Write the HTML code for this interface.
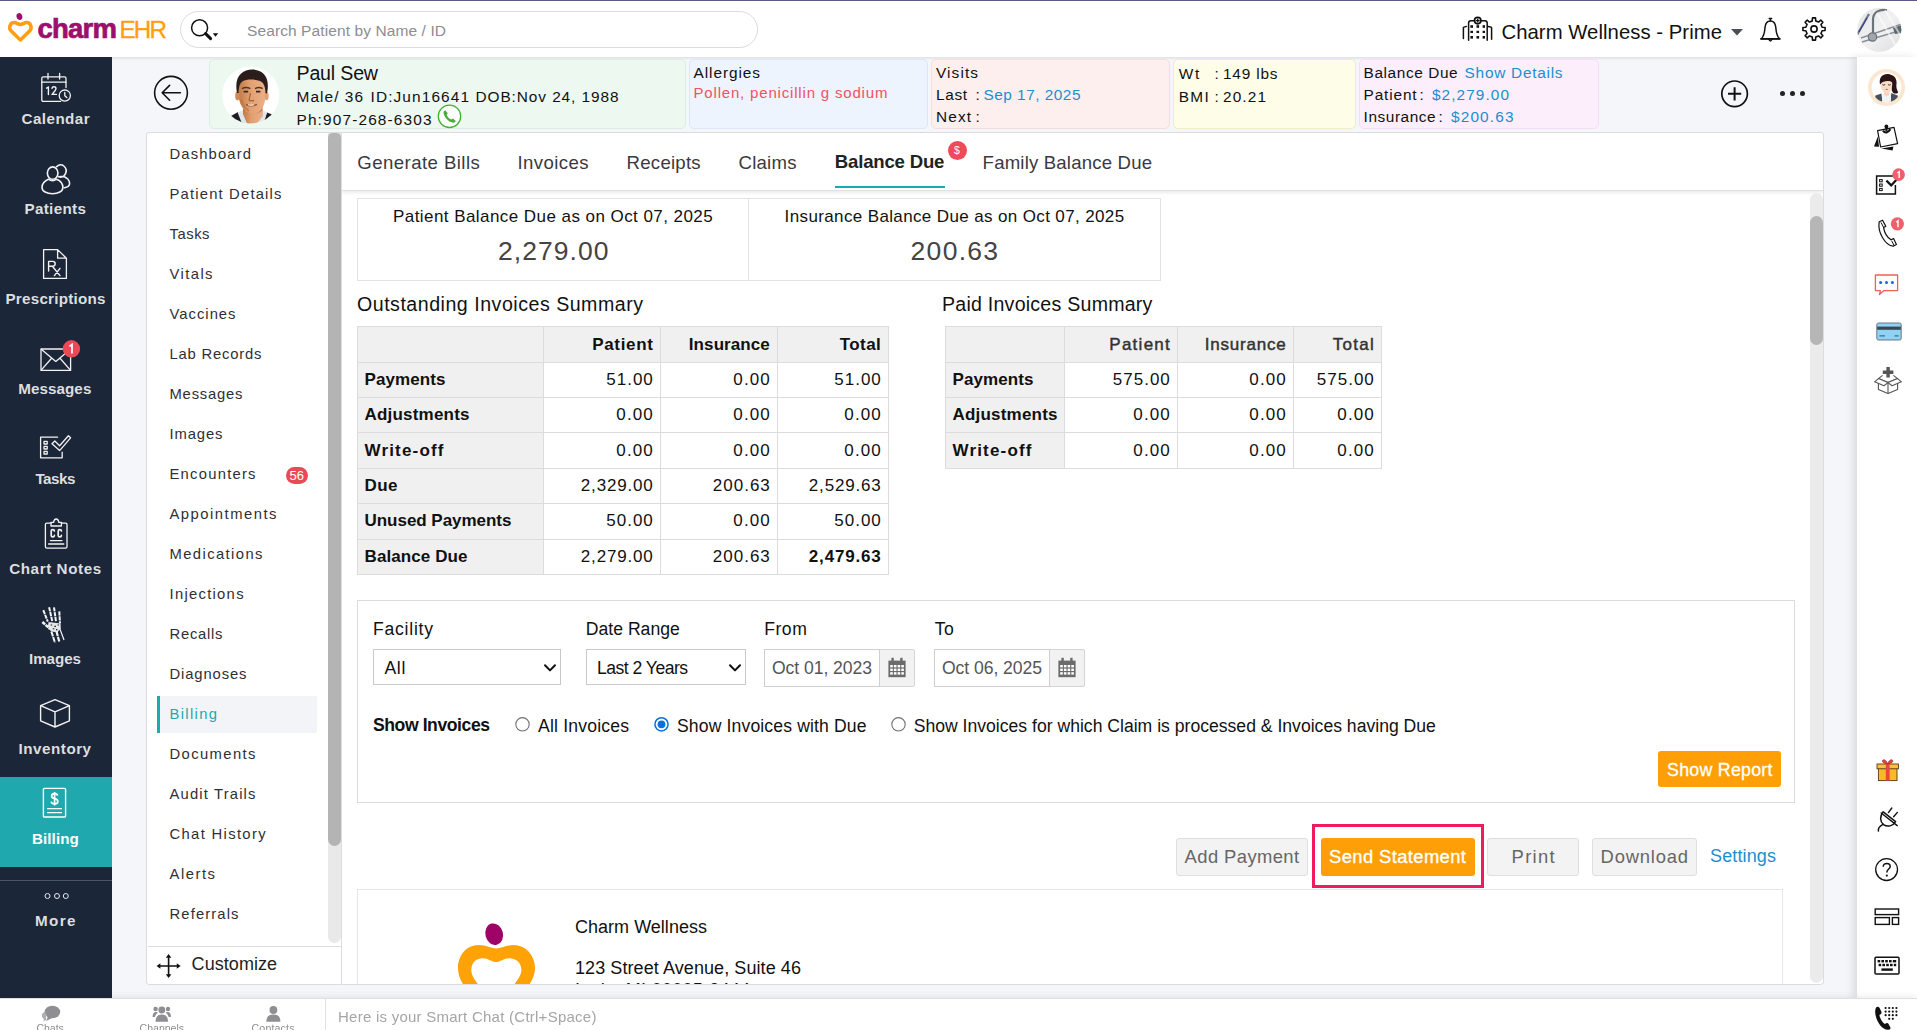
<!DOCTYPE html>
<html><head>
<meta charset="utf-8">
<title>CharmEHR - Billing</title>
<style>
*{box-sizing:border-box;margin:0;padding:0}
html,body{width:1917px;height:1030px;overflow:hidden;background:#f5f6fa;font-family:"Liberation Sans",sans-serif;color:#111}
.abs{position:absolute}
.t{position:absolute;white-space:nowrap;line-height:1}
#top{position:absolute;left:0;top:0;width:1917px;height:57px;background:#fff;border-top:1px solid #5b5b86;box-shadow:0 1px 3px rgba(0,0,0,.12)}
#nav{position:absolute;left:0;top:57px;width:112px;height:941px;background:#1c2639}
.nl{color:#dededf;font-weight:bold}
.ni{position:absolute}
#rbar{position:absolute;left:1857px;top:57px;width:60px;height:941px;background:#fff;box-shadow:-4px 0 8px rgba(0,0,0,.11)}
#bot{position:absolute;left:0;top:998px;width:1917px;height:32px;background:#fff;border-top:1px solid #e0e0e3;box-shadow:0 -2px 6px rgba(0,0,0,.07)}
.card{position:absolute;top:59px;height:70px;border:1px solid #e6e6ea;border-radius:5px}
#smenu{position:absolute;left:146px;top:132px;width:196px;height:853px;background:#fff;border:1px solid #dcdcde;border-radius:3px 0 0 3px}
.sm{color:#2f2f33}
#panel{position:absolute;left:342px;top:132px;width:1482px;height:853px;background:#fff;border:1px solid #dcdcde;border-left:none;border-radius:0 4px 4px 0;overflow:hidden}
</style>
</head>
<body>
<!-- TOP BAR -->
<div id="top">
 <!-- logo -->
 <svg class="abs" style="left:6px;top:8.1px" width="30" height="36" viewBox="0 0 30 36">
  <ellipse cx="13.4" cy="7.6" rx="2.9" ry="3.5" fill="#9c0f6c" transform="rotate(-15 13.4 7.6)"></ellipse>
  <path d="M14.4 30.9 L5.2 22 C2.2 19 4 13.2 8.6 13.6 C10.6 13.8 11.6 15.4 14.4 15.4 C17.2 15.4 18.2 13.8 20.2 13.6 C24.8 13.2 26.6 19 23.6 22 Z" fill="none" stroke="#ff9e0f" stroke-width="3.5" stroke-linejoin="round"></path>
 </svg>
 <span class="t" style="font-weight: bold; color: rgb(156, 15, 108); -webkit-text-stroke: 0.7px rgb(156, 15, 108); font-size: 27.5px; top: 14px; letter-spacing: -0.76px; left: 37.5px;">charm</span>
 <span class="t" style="color: rgb(255, 158, 15); -webkit-text-stroke: 0.35px rgb(255, 158, 15); font-size: 24.2px; top: 17px; letter-spacing: -1.79px; left: 119.4px;">EHR</span>
 <!-- search -->
 <div class="abs" style="left:180px;top:10px;width:578px;height:37px;border:1px solid #d9dbe0;border-radius:19px;background:#fff"></div>
 <svg class="abs" style="left:188px;top:16px" width="34" height="28" viewBox="0 0 34 28">
  <circle cx="11.6" cy="10.8" r="8" fill="none" stroke="#111" stroke-width="1.5"></circle>
  <path d="M17.6 16.6 L22.6 21.6" stroke="#111" stroke-width="3" stroke-linecap="round"></path>
  <path d="M24.8 16.2 h5.4 l-2.7 3.6 z" fill="#111"></path>
 </svg>
 <span class="t" style="color: rgb(141, 141, 147); font-size: 15.5px; top: 22px; letter-spacing: 0.1px; left: 247px;">Search Patient by Name / ID</span>
 <!-- hospital icon -->
 <svg class="abs" style="left:1460px;top:12px" width="36" height="32" viewBox="0 0 36 32">
  <g fill="none" stroke="#111" stroke-width="1.5" stroke-linecap="round" stroke-linejoin="round">
   <path d="M8.6 27.2 V10 Q8.6 7.7 11 7.7 H24.8 Q27.2 7.7 27.2 10 V27.2"></path>
   <path d="M3.4 25.6 V14.4 L6.4 13.4"></path>
   <path d="M31.6 26.2 V15 Q31.6 14.2 30.4 14 L28.4 13.6"></path>
   <circle cx="17.7" cy="7.6" r="3.2" fill="#fff" stroke-width="1.7"></circle>
  </g>
  <path d="M17.7 5.6 V9.6 M15.7 7.6 H19.7" stroke="#111" stroke-width="1.3"></path>
  <g fill="#111">
   <rect x="10.4" y="12.2" width="2.6" height="2.6"></rect><rect x="16.5" y="12.2" width="2.6" height="2.6"></rect><rect x="22.6" y="12.2" width="2.4" height="2.6"></rect>
   <rect x="10.4" y="17.8" width="2.6" height="2.2"></rect><rect x="16.5" y="17.8" width="2.6" height="2.2"></rect><rect x="22.6" y="17.8" width="2.4" height="2.2"></rect>
   <rect x="10.4" y="23" width="2.6" height="2.6"></rect><rect x="16.5" y="23" width="2.6" height="2.6"></rect><rect x="22.6" y="23" width="2.4" height="2.6"></rect>
  </g>
 </svg>
 <span class="t" style="color: rgb(17, 17, 17); font-size: 20.3px; top: 21px; letter-spacing: 0.05px; left: 1501.5px;">Charm Wellness - Prime</span>
 <svg class="abs" style="left:1730px;top:27px" width="14" height="8" viewBox="0 0 14 8"><path d="M1 1 H13 L7 7.4 Z" fill="#4a4f55"></path></svg>
 <!-- bell -->
 <svg class="abs" style="left:1758px;top:13px" width="26" height="30" viewBox="0 0 26 30">
  <g fill="none" stroke="#111" stroke-width="1.5" stroke-linejoin="round" stroke-linecap="round">
   <path d="M3.4 24.8 C6.8 21 6.6 17 7 13.4 C7.4 9.4 9.6 7 12.4 7 C15.2 7 17.4 9.4 17.8 13.4 C18.2 17 18 21 21.4 24.8 Z"></path>
   <path d="M3 24.9 H21.8" stroke-width="1.8"></path>
   <path d="M12.4 6.8 V4.8 M11.2 4.6 H13.6"></path>
   <path d="M10.8 25.2 Q12.4 28.6 14 25.2"></path>
  </g>
 </svg>
 <!-- gear -->
 <svg class="abs" style="left:1802.3px;top:16.4px" width="24" height="24" viewBox="0 0 24 24">
  <path d="M20.11 10.25 L23.10 10.51 L23.10 13.49 L20.11 13.75 L18.97 16.50 L20.90 18.79 L18.79 20.90 L16.50 18.97 L13.75 20.11 L13.49 23.10 L10.51 23.10 L10.25 20.11 L7.50 18.97 L5.21 20.90 L3.10 18.79 L5.03 16.50 L3.89 13.75 L0.90 13.49 L0.90 10.51 L3.89 10.25 L5.03 7.50 L3.10 5.21 L5.21 3.10 L7.50 5.03 L10.25 3.89 L10.51 0.90 L13.49 0.90 L13.75 3.89 L16.50 5.03 L18.79 3.10 L20.90 5.21 L18.97 7.50 Z" fill="none" stroke="#111" stroke-width="1.6" stroke-linejoin="round"></path>
  <circle cx="12" cy="12" r="3.1" fill="none" stroke="#111" stroke-width="1.6"></circle>
 </svg>
 <!-- user avatar (stethoscope photo) -->
 <svg class="abs" style="left:1857px;top:7px" width="45" height="45" viewBox="0 0 45 45">
  <defs><clipPath id="cpA"><circle cx="22.3" cy="21.8" r="22"></circle></clipPath>
  <linearGradient id="gA" x1="0" y1="0" x2="1" y2="1"><stop offset="0" stop-color="#e3e4e6"></stop><stop offset=".5" stop-color="#f1f1f2"></stop><stop offset="1" stop-color="#dcdddf"></stop></linearGradient></defs>
  <g clip-path="url(#cpA)">
   <rect width="45" height="45" fill="url(#gA)"></rect>
   <path d="M0 27 L12 6" stroke="#6f7486" stroke-width="2.2"></path>
   <path d="M2 24 L10 10" stroke="#2c3a8c" stroke-width="1"></path>
   <path d="M16 28 V12 C16 4 22 1 30 2" fill="none" stroke="#6d737b" stroke-width="2.2"></path>
   <path d="M4 30 L45 16 M5 34 L45 22" stroke="#8b9096" stroke-width="1.6"></path>
   <path d="M36 20 L45 17 L45 25 L38 26Z" fill="#5c6670"></path>
   <circle cx="15.5" cy="29" r="4.2" fill="#a2a7ad" stroke="#6d737b" stroke-width="1.2"></circle>
   <path d="M20 5 L40 40 M28 2 L45 30" stroke="#fff" stroke-width="2" opacity=".55"></path>
  </g>
 </svg>
</div>
<!-- LEFT NAV -->
<div id="nav">
 <div class="abs" style="left:0;top:720px;width:112px;height:90px;background:#1fa9ae"></div>
 <div class="abs" style="left:0;top:823px;width:112px;height:1px;background:#4b5463"></div>
</div>
<div id="navi">
 <!-- calendar -->
 <svg class="abs" style="left:40px;top:71px" width="32" height="33" viewBox="0 0 32 33" fill="none" stroke="#f2f2f2" stroke-width="1.3" stroke-linecap="round" stroke-linejoin="round">
  <path d="M20.6 30.4 H3.2 Q1.8 30.4 1.8 29 V7.2 Q1.8 5.8 3.2 5.8 H24.6 Q26 5.8 26 7.2 V16.6"></path>
  <path d="M1.8 11.2 H26 M8 2.4 V8 M19.6 2.4 V8"></path>
  <circle cx="24.8" cy="24.6" r="5.6"></circle>
  <path d="M24.8 21.4 V24.8 L26.8 26.6"></path>
  <path d="M6.6 17.2 L8.4 16 V23.6 M12 17.4 Q12.2 15.8 14 15.8 Q16 15.8 16 17.6 Q16 19 12 23.4 H16.4" stroke-width="1.4"></path>
 </svg>
 <span class="t nl" style="font-size: 15.2px; top: 111px; letter-spacing: 0.43px; left: 21.6px;">Calendar</span>
 <!-- patients -->
 <svg class="abs" style="left:40px;top:163px" width="32" height="33" viewBox="0 0 32 33" fill="none" stroke="#f2f2f2" stroke-width="1.6" stroke-linecap="round" stroke-linejoin="round">
  <path d="M16.6 3.7 A5.5 6.2 0 1 1 18.6 13.8 L23.8 13.4 C27 14.6 29.6 17.6 29.6 20.4 C29.6 22.6 27 24.2 24.4 24.8"></path>
  <ellipse cx="12.65" cy="10.1" rx="5.3" ry="6.2"></ellipse>
  <path d="M8.4 16.2 C4.6 17.8 2 20.8 2 24.5 C2 28.3 6.8 30.7 12.5 30.7 C18.2 30.7 22.9 28.3 22.9 24.5 C22.9 20.8 20.5 17.8 16.6 16.2 Q12.5 19.4 8.4 16.2 Z"></path>
 </svg>
 <span class="t nl" style="font-size: 15.2px; top: 201px; letter-spacing: 0.34px; left: 24.45px;">Patients</span>
 <!-- prescriptions -->
 <svg class="abs" style="left:41px;top:247px" width="28" height="34" viewBox="0 0 28 34" fill="none" stroke="#f2f2f2" stroke-width="1.3" stroke-linecap="round" stroke-linejoin="round">
  <path d="M2.6 2.6 H16.6 L25.4 11.2 V31.4 H2.6 Z M16.6 2.6 V11.2 H25.4"></path>
  <path d="M7.6 24 V14.4 H11.6 Q14.2 14.4 14.2 16.8 Q14.2 19.2 11.6 19.2 H7.6 M11.4 19.2 L19 28.6 M13.4 28.6 L19 21.4" stroke-width="1.4"></path>
 </svg>
 <span class="t nl" style="font-size: 15.2px; top: 291px; letter-spacing: 0.24px; left: 5.5px;">Prescriptions</span>
 <!-- messages -->
 <svg class="abs" style="left:39px;top:338px" width="44" height="36" viewBox="0 0 44 36">
  <g fill="none" stroke="#f2f2f2" stroke-width="1.3" stroke-linejoin="round"><rect x="2" y="11" width="29.6" height="21.4"></rect><path d="M2 11 L16.8 23.4 L31.6 11 M2 32.4 L12.8 20 M31.6 32.4 L20.8 20"></path></g>
  <circle cx="32.4" cy="10.8" r="8.7" fill="#ea4956"></circle>
  <path d="M30.4 8.4 L33 6.4 V15.4" fill="none" stroke="#fff" stroke-width="1.7"></path>
 </svg>
 <span class="t nl" style="font-size: 15.2px; top: 381px; letter-spacing: 0.06px; left: 18.3px;">Messages</span>
 <!-- tasks -->
 <svg class="abs" style="left:38px;top:433px" width="36" height="28" viewBox="0 0 36 28" fill="none" stroke="#f2f2f2" stroke-width="1.3" stroke-linejoin="round" stroke-linecap="round">
  <path d="M24.2 19.2 V24.8 H2.6 V4.2 H19.6"></path>
  <rect x="6" y="8.4" width="3.2" height="2.6"></rect><rect x="6" y="13.4" width="3.2" height="2.6"></rect><rect x="6" y="18.4" width="3.2" height="2.6"></rect>
  <path d="M14 10.8 L16.8 8 L21.6 12.8 L30.4 2.8 L32.6 4.8 L21.6 17.6 Z"></path>
 </svg>
 <span class="t nl" style="font-size: 15.2px; top: 471px; letter-spacing: -0.48px; left: 35.4px;">Tasks</span>
 <!-- chart notes -->
 <svg class="abs" style="left:43px;top:516px" width="26" height="35" viewBox="0 0 26 35" fill="none" stroke="#f2f2f2" stroke-width="1.3" stroke-linejoin="round" stroke-linecap="round">
  <path d="M8 7.2 H3.8 Q2.4 7.2 2.4 8.6 V30.8 Q2.4 32.2 3.8 32.2 H22.6 Q24 32.2 24 30.8 V8.6 Q24 7.2 22.6 7.2 H18.4"></path>
  <path d="M8 10 V6.4 H10.6 Q11 3 13.2 3 Q15.4 3 15.8 6.4 H18.4 V10 Z"></path>
  <path d="M11.4 15 Q11.4 13.6 9.8 13.6 Q8.2 13.6 8.2 15 V19.4 Q8.2 20.8 9.8 20.8 Q11.4 20.8 11.4 19.4 M18.4 15 Q18.4 13.6 16.8 13.6 Q15.2 13.6 15.2 15 V19.4 Q15.2 20.8 16.8 20.8 Q18.4 20.8 18.4 19.4" stroke-width="1.7"></path>
  <path d="M7.4 24.6 H19 M5.6 28 H20.8"></path>
 </svg>
 <span class="t nl" style="font-size: 15.2px; top: 561px; letter-spacing: 0.59px; left: 9.2px;">Chart Notes</span>
 <!-- images (hand xray) -->
 <svg class="abs" style="left:38px;top:604px" width="30" height="42" viewBox="38 604 30 42" fill="none" stroke="#f4f4f4" stroke-linecap="butt">
  <g stroke-width="2" stroke-dasharray="4.2 .7">
   <path d="M43.3 610.2 L47.8 621.6"></path><path d="M49.1 607.3 L52.3 621.2"></path><path d="M54 607.3 L56 621.6"></path><path d="M59.3 611.4 L60 623.4"></path>
  </g>
  <path d="M42.4 622 L50.2 629" stroke-width="2.6" stroke-dasharray="3.6 .7"></path>
  <path d="M48.6 622 L60.6 623.6 L60.8 628.6 L57.4 632.2 L51 631.4 L47.8 626.6 Z" fill="#f4f4f4" stroke="none" opacity=".92"></path>
  <path d="M50.6 625 h1.6 M54.4 626.4 h1.6 M57.6 625 h1.4 M52.8 628.8 h1.6 M56 629.6 h1.4" stroke="#1c2639" stroke-width="1.1"></path>
  <path d="M51.4 631.6 L55 642.8" stroke-width="2" stroke-dasharray="5 .7"></path>
  <path d="M56.4 631.2 L59.4 642" stroke-width="2.2" stroke-dasharray="5 .7"></path>
  <path d="M59.8 628.6 L64 640" stroke-width="1.2"></path>
 </svg>
 <span class="t nl" style="font-size: 15.2px; top: 651px; letter-spacing: -0.07px; left: 29px;">Images</span>
 <!-- inventory cube -->
 <svg class="abs" style="left:38px;top:697px" width="34" height="33" viewBox="0 0 34 33" fill="none" stroke="#f2f2f2" stroke-width="1.4" stroke-linejoin="round">
  <path d="M17 2.6 L31.4 8.6 V23.8 L17 30 L2.6 23.8 V8.6 Z M2.6 8.6 L17 14.8 L31.4 8.6 M17 14.8 V30"></path>
 </svg>
 <span class="t nl" style="font-size: 15.2px; top: 741px; letter-spacing: 0.52px; left: 18.55px;">Inventory</span>
 <!-- billing -->
 <svg class="abs" style="left:41px;top:786px" width="27" height="33" viewBox="0 0 27 33" fill="none" stroke="#fff" stroke-width="1.4" stroke-linejoin="round">
  <rect x="2.4" y="2.4" width="22.2" height="28.6" rx="1"></rect>
  <path d="M6 22.6 H21 M6 26.6 H21" stroke-width="1.3"></path>
  <path d="M16.6 9.6 Q16.2 7.6 13.6 7.6 Q10.6 7.6 10.6 10 Q10.6 12 13.6 12.6 Q16.8 13.2 16.8 15.4 Q16.8 17.8 13.6 17.8 Q10.6 17.8 10.2 15.6 M13.6 6 V19.4" stroke-width="1.7"></path>
 </svg>
 <span class="t nl" style="color: rgb(255, 255, 255); font-size: 15.2px; top: 831px; letter-spacing: 0.1px; left: 31.9px;">Billing</span>
 <!-- more -->
 <svg class="abs" style="left:42px;top:891px" width="30" height="10" viewBox="0 0 30 10" fill="none" stroke="#e8e8ee" stroke-width="1"><circle cx="5.5" cy="5" r="2.5"></circle><circle cx="15" cy="5" r="2.5"></circle><circle cx="23.8" cy="5" r="2.5"></circle></svg>
 <span class="t nl" style="font-size: 15.2px; top: 913px; letter-spacing: 1.4px; left: 34.95px;">More</span>
</div>
<!-- RIGHT BAR -->
<div id="rbar"></div>
<div id="rbi">
 <!-- assistant avatar -->
 <svg class="abs" style="left:1865px;top:66px" width="44" height="44" viewBox="0 0 44 44">
  <defs><clipPath id="cpW"><circle cx="21.5" cy="21.5" r="14.8"></circle></clipPath></defs>
  <circle cx="21.5" cy="21.5" r="18.6" fill="#e9e9ee" opacity=".6"></circle>
  <circle cx="21.5" cy="21.5" r="16.6" fill="#fff" stroke="#fde6cc" stroke-width="3.4"></circle>
  <g clip-path="url(#cpW)">
   <path d="M24 9 C30 8 32.4 14 31.4 19 C31 22 32.6 24.6 33.2 26.4 C31 28.6 28 27.6 27 25 Z" fill="#2a1415"></path>
   <path d="M9.6 35.4 L10.4 29.4 L16.6 27.4 L17.4 36 Z" fill="#47515b"></path>
   <path d="M33.8 35.4 L32.6 29.4 L26.2 27 L25.6 36 Z" fill="#47515b"></path>
   <path d="M16.6 27.4 L17.4 36 H25.6 L26.2 27 L21.6 30 Z" fill="#f1f2f4"></path>
   <path d="M19 23.6 H24.4 V28.4 L21.6 30.4 L19 28.4 Z" fill="#f4d4bd"></path>
   <path d="M15.4 16.4 C15.2 21 17 27 21.6 27 C26 27 27.6 21 27.2 16 C26 12.6 16.6 12.6 15.4 16.4 Z" fill="#f8dcc6"></path>
   <path d="M15 18.4 C13.6 11 18 7.6 23 8 C28 8.4 30 12 28.4 19 C27.6 15.6 25.4 14.6 22.6 15 C19.6 15.4 17 15.6 15 18.4 Z" fill="#2a1415"></path>
   <path d="M17.4 18.6 q1.4 1 2.8 0 M23 18.6 q1.4 1 2.8 0" fill="none" stroke="#2c2a30" stroke-width=".9"></path>
   <ellipse cx="21.7" cy="23.4" rx="1.1" ry=".7" fill="#ee4b55"></ellipse>
  </g>
 </svg>
 <!-- pinned note -->
 <svg class="abs" style="left:1872px;top:122px" width="30" height="30" viewBox="0 0 30 30">
  <path d="M2 24.4 L5.8 14.6 L7 24.8 Z" fill="#111"></path>
  <path d="M9.4 26.4 L21.4 24.6 L20.6 28.4 Z" fill="#111"></path>
  <path d="M5.6 8.6 L22 5.4 L25.6 21.6 L8.6 25 Z" fill="#fff" stroke="#111" stroke-width="1.2" stroke-linejoin="round"></path>
  <path d="M11 8.6 Q14.4 13 18.4 7.2" fill="none" stroke="#111" stroke-width="2.2"></path>
  <circle cx="14.4" cy="4.4" r="1.9" fill="#111"></circle><path d="M14.4 5 V9" stroke="#111" stroke-width="2"></path>
 </svg>
 <!-- tasks -->
 <svg class="abs" style="left:1873px;top:166px" width="36" height="32" viewBox="0 0 36 32">
  <g fill="none" stroke="#111" stroke-width="1.5"><path d="M22.4 19 V28 H3.6 V10 H22"></path><rect x="6.6" y="13.6" width="2.6" height="2.2" stroke-width="1"></rect><rect x="6.6" y="18" width="2.6" height="2.2" stroke-width="1"></rect><rect x="6.6" y="22.4" width="2.6" height="2.2" stroke-width="1"></rect><path d="M13.4 14.6 L18.2 19.4 L25.6 11.4" stroke-width="2.2"></path></g>
  <circle cx="25.6" cy="8.6" r="6.3" fill="#f0606a"></circle><path d="M24.4 7 L26.2 5.6 V12" fill="none" stroke="#fff" stroke-width="1.4"></path>
 </svg>
 <!-- phone -->
 <svg class="abs" style="left:1873px;top:215px" width="36" height="36" viewBox="0 0 36 36">
  <path d="M6.2 6.8 L9.6 5.2 L12.8 11.2 L10.6 12.6 C11.4 17.6 14.2 22.4 18 24.8 L20.6 23.6 L23.4 29.4 L20.2 31.2 C12 30.4 4.4 17 6.2 6.8 Z" fill="#fff" stroke="#111" stroke-width="1.2" stroke-linejoin="round"></path>
  <path d="M8 7.4 L11 13.2 M18.6 25.8 L21.4 31" stroke="#111" stroke-width="1"></path>
  <circle cx="24.4" cy="8.8" r="6.6" fill="#f0606a"></circle><path d="M23.2 7.2 L25 5.8 V12.2" fill="none" stroke="#fff" stroke-width="1.4"></path>
 </svg>
 <!-- chat -->
 <svg class="abs" style="left:1873px;top:272px" width="28" height="26" viewBox="0 0 28 26">
  <path d="M2.4 3 H24.6 V18.6 H11 L6.4 22.6 L7.4 18.6 H2.4 Z" fill="#fff" stroke="#f0605a" stroke-width="1.3" stroke-linejoin="round"></path>
  <circle cx="7.6" cy="10.4" r="1.5" fill="#1a66c9"></circle><circle cx="13.5" cy="10.4" r="1.5" fill="#1a66c9"></circle><circle cx="19.4" cy="10.4" r="1.5" fill="#1a66c9"></circle>
 </svg>
 <!-- card -->
 <svg class="abs" style="left:1875px;top:321px" width="28" height="21" viewBox="0 0 28 21">
  <rect x="1.8" y="2" width="24.4" height="17" rx="1.6" fill="#8fd3f4" stroke="#6b7680" stroke-width="1"></rect>
  <rect x="2.2" y="5.6" width="23.6" height="3.2" fill="#3b4754"></rect>
  <path d="M4.4 14.8 H10 M19.6 14.8 H23.6" stroke="#3b6f95" stroke-width="1.3"></path>
 </svg>
 <!-- box plus -->
 <svg class="abs" style="left:1872px;top:364px" width="32" height="32" viewBox="0 0 32 32">
  <g fill="#fff" stroke="#555" stroke-width="1.1" stroke-linejoin="round">
   <path d="M6.4 14.6 L16 18.6 L25.6 14.6 V25.4 L16 29.6 L6.4 25.4 Z"></path>
   <path d="M16 18.6 V29.6" fill="none"></path>
   <path d="M6.4 14.6 L2.6 17.8 L12 21.8 L16 18.6 Z M25.6 14.6 L29.4 17.8 L20 21.8 L16 18.6 Z"></path>
   <path d="M6.4 14.6 L10.6 11.4 M25.6 14.6 L21.4 11.4" fill="none"></path>
  </g>
  <path d="M14.4 3 H17.8 V6.6 H21.4 V10 H17.8 V13.6 H14.4 V10 H10.8 V6.6 H14.4 Z" fill="#555"></path>
 </svg>
 <!-- gift -->
 <svg class="abs" style="left:1875px;top:757px" width="26" height="26" viewBox="0 0 26 26">
  <rect x="3.4" y="11" width="18.6" height="12.6" fill="#fbb829" stroke="#5a3a1a" stroke-width=".9"></rect>
  <rect x="2" y="7" width="21.4" height="4.8" fill="#fbc13d" stroke="#5a3a1a" stroke-width=".9"></rect>
  <rect x="10.8" y="7" width="3.8" height="16.6" fill="#e8473f"></rect>
  <path d="M12.6 7 C9 6.4 6.6 5 7.6 3.4 C9 1.6 11.6 3.8 12.6 7 C13.6 3.8 16.2 1.6 17.6 3.4 C18.6 5 16.2 6.4 12.6 7 Z" fill="#e8473f" stroke="#9c2a24" stroke-width=".7"></path>
 </svg>
 <!-- plug -->
 <svg class="abs" style="left:1874px;top:805px" width="28" height="28" viewBox="0 0 28 28" fill="none" stroke="#111" stroke-width="1.5" stroke-linecap="round" stroke-linejoin="round">
  <path d="M9.2 6.8 L21.6 16.6 C19 21.2 13.4 22.4 9.6 19.6 C5.8 16.6 5.6 11.4 9.2 6.8 Z"></path>
  <path d="M14.4 7.6 L17.8 3 M19.6 11.8 L23.4 7.4 M7.2 8 L23.2 20.6" stroke-width="1.4"></path>
  <path d="M8.6 19.6 C6 21 3.8 22.4 4.4 26"></path>
 </svg>
 <!-- help -->
 <svg class="abs" style="left:1874px;top:857px" width="26" height="26" viewBox="0 0 26 26">
  <circle cx="12.6" cy="12.6" r="10.9" fill="none" stroke="#111" stroke-width="1.3"></circle>
  <path d="M9.2 9.8 C9.2 7.4 10.8 6.4 12.8 6.4 C14.8 6.4 16.2 7.6 16.2 9.4 C16.2 12 12.8 12 12.8 15.4" fill="none" stroke="#111" stroke-width="1.5"></path>
  <circle cx="12.8" cy="18.6" r="1.1" fill="#111"></circle>
 </svg>
 <!-- layout -->
 <svg class="abs" style="left:1873px;top:907px" width="28" height="20" viewBox="0 0 28 20" fill="none" stroke="#111" stroke-width="1.4">
  <rect x="2.2" y="2" width="23.4" height="5.6"></rect><rect x="2.2" y="10.6" width="14.2" height="6.8"></rect><rect x="19.4" y="10.6" width="6.2" height="6.8"></rect>
 </svg>
 <!-- keyboard -->
 <svg class="abs" style="left:1873px;top:955px" width="28" height="21" viewBox="0 0 28 21">
  <rect x="2" y="2.2" width="24" height="16.8" rx="1" fill="#fff" stroke="#111" stroke-width="1.5"></rect>
  <g fill="#111"><rect x="4.6" y="5" width="2.6" height="2.4"></rect><rect x="8.4" y="5" width="2.6" height="2.4"></rect><rect x="12.2" y="5" width="2.6" height="2.4"></rect><rect x="16" y="5" width="2.6" height="2.4"></rect><rect x="19.8" y="5" width="3.4" height="2.4"></rect>
  <rect x="5.6" y="8.8" width="2.6" height="2.4"></rect><rect x="9.4" y="8.8" width="2.6" height="2.4"></rect><rect x="13.2" y="8.8" width="2.6" height="2.4"></rect><rect x="17" y="8.8" width="2.6" height="2.4"></rect><rect x="20.8" y="8.8" width="2.4" height="2.4"></rect>
  <rect x="8.4" y="13.4" width="11.4" height="2.4"></rect></g>
 </svg>
</div>
<!-- PATIENT HEADER -->
<div id="phead">
 <!-- back arrow -->
 <svg class="abs" style="left:152px;top:74px" width="38" height="38" viewBox="0 0 38 38">
  <circle cx="19" cy="18.8" r="16.4" fill="none" stroke="#111" stroke-width="1.6"></circle>
  <path d="M28.4 18.8 H10.4 M17.6 11.4 L10.2 18.8 L17.6 26.2" fill="none" stroke="#111" stroke-width="1.6" stroke-linecap="round" stroke-linejoin="round"></path>
 </svg>
 <div class="card" style="left:209px;width:477px;background:#edf8f1;border-color:#dbeee2"></div>
 <div class="card" style="left:689px;width:239px;background:#edf4fd;border-color:#dde6f4"></div>
 <div class="card" style="left:931px;width:239px;background:#fdefee;border-color:#f4dedd"></div>
 <div class="card" style="left:1173px;width:183px;background:#fefee8;border-color:#eeedc6"></div>
 <div class="card" style="left:1359px;width:240px;background:#fdeefc;border-color:#f6dcf4"></div>
 <!-- patient avatar -->
 <svg class="abs" style="left:221px;top:66px" width="60" height="60" viewBox="0 0 60 60">
  <defs><clipPath id="cpP"><circle cx="29.7" cy="29" r="28.5"></circle></clipPath>
  <linearGradient id="gF" x1="0" y1="0" x2="1" y2="0"><stop offset="0" stop-color="#c07a48"></stop><stop offset=".45" stop-color="#e3a172"></stop><stop offset="1" stop-color="#eab08a"></stop></linearGradient></defs>
  <circle cx="29.7" cy="29" r="28.5" fill="#fff"></circle>
  <g clip-path="url(#cpP)">
   <path d="M10 50 L17 46 L24 60 L8 60 Z" fill="#221c22"></path>
   <path d="M55 50 L46 46.4 L41 60 L56 60 Z" fill="#221c22"></path>
   <path d="M16.6 46.6 L22 44 L30 60 H22 Z" fill="#dfe6ee"></path>
   <path d="M46 46.6 L41.6 44 L36 60 H42 Z" fill="#dfe6ee"></path>
   <path d="M22 38 H42 V50 L34 60 H27 L22 48 Z" fill="url(#gF)"></path>
   <path d="M22 44 Q30 52 41 45 L41 42 H22 Z" fill="#b06c40" opacity=".7"></path>
   <path d="M17.4 22 C17 30 18 36 21 41 C24 46 28 48.4 31.6 48.4 C35.6 48.4 40 45 42.4 40 C44.6 35 45 29 44.4 22 C43 15 38 12 31 12 C24 12 18.6 15 17.4 22 Z" fill="url(#gF)"></path>
   <ellipse cx="16.4" cy="30" rx="2.2" ry="4.4" fill="#cf8a58"></ellipse><ellipse cx="45.6" cy="30" rx="2" ry="4.2" fill="#e3a172"></ellipse>
   <path d="M16 27 C12.6 10 22 3.4 31.4 3.6 C41.4 3.8 49.6 10 46 27.6 L44.4 27 C44.4 20 42.4 16.4 39 15 C33 13 25 13.2 21.4 15.4 C18.6 17.4 17.8 21 17.6 27 Z" fill="#2a1d1c"></path>
   <path d="M21 22.6 Q25 20.4 29.4 22.6 M34 22.6 Q38 20.6 41.6 22.6" fill="none" stroke="#5a3420" stroke-width="1.5"></path>
   <path d="M22.6 25.6 h4.6 M35 25.6 h4.4" stroke="#3a2622" stroke-width="1.7"></path>
   <path d="M29.6 27 L28 34 Q30 35.6 33 34.4" fill="none" stroke="#a8653a" stroke-width="1.2"></path>
   <path d="M25 38.4 Q30 41.4 36 38.4" fill="none" stroke="#9a5434" stroke-width="1.4"></path>
   <path d="M27 38.8 Q30 40 33 38.8" fill="none" stroke="#fff" stroke-width=".9"></path>
   <path d="M20 33 Q22 41 28 45" fill="none" stroke="#b8723f" stroke-width="2" opacity=".6"></path>
  </g>
 </svg>
 <span class="t" style="font-size: 19.6px; top: 64px; letter-spacing: -0.18px; left: 296.5px;">Paul Sew</span>
 <span class="t" style="font-size: 15.4px; top: 89px; letter-spacing: 1.07px; left: 296.5px;">Male/ 36</span>
 <span class="t" style="font-size: 15.4px; top: 89px; letter-spacing: 1.12px; left: 370.5px;">ID:Jun16641</span>
 <span class="t" style="font-size: 15.4px; top: 89px; letter-spacing: 0.92px; left: 475.5px;">DOB:Nov 24, 1988</span>
 <span class="t" style="font-size: 15.4px; top: 112px; letter-spacing: 1.15px; left: 296.5px;">Ph:907-268-6303</span>
 <svg class="abs" style="left:437px;top:103.5px" width="25" height="25" viewBox="0 0 25 25">
  <circle cx="12.5" cy="12.3" r="11.2" fill="#fff" stroke="#45b035" stroke-width="1.3"></circle>
  <path d="M8.2 6.2 C7 6.6 6.2 8 6.6 9.6 C7.6 13.6 11 17.4 15.4 18.6 C17 19 18.4 18.2 18.8 17 L16 14.6 L14.2 15.6 C12.4 14.8 10.4 12.8 9.6 11 L10.8 9.2 Z" fill="#45b035"></path>
 </svg>
 <!-- allergies -->
 <span class="t" style="font-size: 15.4px; top: 65px; letter-spacing: 0.93px; left: 693.5px;">Allergies</span>
 <span class="t" style="color: rgb(240, 82, 95); font-size: 15px; top: 85px; letter-spacing: 0.82px; left: 693.5px;">Pollen, penicillin g sodium</span>
 <!-- visits -->
 <span class="t" style="font-size: 15.4px; top: 65px; letter-spacing: 1.1px; left: 936px;">Visits</span>
 <span class="t" style="font-size: 15.4px; top: 87px; letter-spacing: 0.64px; left: 936px;">Last</span>
 <span class="t" style="font-size: 15.4px; top: 87px; left: 975.6px;">:</span>
 <span class="t" style="color: rgb(26, 143, 206); font-size: 15.4px; top: 87px; letter-spacing: 0.49px; left: 983.5px;">Sep 17, 2025</span>
 <span class="t" style="font-size: 15.4px; top: 109px; letter-spacing: 1.11px; left: 936px;">Next</span>
 <span class="t" style="font-size: 15.4px; top: 109px; left: 975.6px;">:</span>
 <!-- vitals -->
 <span class="t" style="font-size: 15.4px; top: 66px; letter-spacing: 1.69px; left: 1178.8px;">Wt</span>
 <span class="t" style="font-size: 15.4px; top: 66px; left: 1214.6px;">:</span>
 <span class="t" style="font-size: 15.4px; top: 66px; letter-spacing: 0.81px; left: 1223px;">149 lbs</span>
 <span class="t" style="font-size: 15.4px; top: 89px; letter-spacing: 1.31px; left: 1178.8px;">BMI</span>
 <span class="t" style="font-size: 15.4px; top: 89px; left: 1214.6px;">:</span>
 <span class="t" style="font-size: 15.4px; top: 89px; letter-spacing: 1.12px; left: 1223px;">20.21</span>
 <!-- balance -->
 <span class="t" style="font-size: 15.4px; top: 65px; letter-spacing: 0.59px; left: 1363.6px;">Balance Due</span>
 <span class="t" style="color: rgb(26, 143, 206); font-size: 15.4px; top: 65px; letter-spacing: 0.74px; left: 1464.6px;">Show Details</span>
 <span class="t" style="font-size: 15.4px; top: 87px; letter-spacing: 0.85px; left: 1363.6px;">Patient</span>
 <span class="t" style="font-size: 15.4px; top: 87px; left: 1419.6px;">:</span>
 <span class="t" style="color: rgb(26, 143, 206); font-size: 15.4px; top: 87px; letter-spacing: 1.06px; left: 1432px;">$2,279.00</span>
 <span class="t" style="font-size: 15.4px; top: 109px; letter-spacing: 0.55px; left: 1363.6px;">Insurance</span>
 <span class="t" style="font-size: 15.4px; top: 109px; left: 1438.6px;">:</span>
 <span class="t" style="color: rgb(26, 143, 206); font-size: 15.4px; top: 109px; letter-spacing: 1.14px; left: 1451px;">$200.63</span>
 <!-- plus / dots -->
 <svg class="abs" style="left:1719px;top:78px" width="32" height="32" viewBox="0 0 32 32">
  <circle cx="15.6" cy="15.8" r="12.8" fill="none" stroke="#111" stroke-width="1.7"></circle>
  <path d="M15.6 9.2 V22.4 M9 15.8 H22.2" stroke="#111" stroke-width="2"></path>
 </svg>
 <div class="abs" style="left:1779.6px;top:91.4px;width:5px;height:5px;border-radius:50%;background:#222"></div>
 <div class="abs" style="left:1790px;top:91.4px;width:5px;height:5px;border-radius:50%;background:#222"></div>
 <div class="abs" style="left:1800.4px;top:91.4px;width:5px;height:5px;border-radius:50%;background:#222"></div>
</div>
<!-- SIDE MENU -->
<div id="smenu"></div>
<div id="smi">
 <div class="abs" style="left:157px;top:696px;width:160px;height:37px;background:#f3f4f8;border-left:3px solid #1fa9ae"></div>
 <span class="t sm" style="font-size: 14.8px; top: 147px; letter-spacing: 1.14px; left: 169.5px;">Dashboard</span>
 <span class="t sm" style="font-size: 14.8px; top: 187px; letter-spacing: 1.18px; left: 169.5px;">Patient Details</span>
 <span class="t sm" style="font-size: 14.8px; top: 227px; letter-spacing: 0.54px; left: 169.5px;">Tasks</span>
 <span class="t sm" style="font-size: 14.8px; top: 267px; letter-spacing: 1.42px; left: 169.5px;">Vitals</span>
 <span class="t sm" style="font-size: 14.8px; top: 307px; letter-spacing: 1.01px; left: 169.5px;">Vaccines</span>
 <span class="t sm" style="font-size: 14.8px; top: 347px; letter-spacing: 0.81px; left: 169.5px;">Lab Records</span>
 <span class="t sm" style="font-size: 14.8px; top: 387px; letter-spacing: 0.79px; left: 169.5px;">Messages</span>
 <span class="t sm" style="font-size: 14.8px; top: 427px; letter-spacing: 0.89px; left: 169.5px;">Images</span>
 <span class="t sm" style="font-size: 14.8px; top: 467px; letter-spacing: 1.24px; left: 169.5px;">Encounters</span>
 <span class="t sm" style="font-size: 14.8px; top: 507px; letter-spacing: 1.5px; left: 169.5px;">Appointments</span>
 <span class="t sm" style="font-size: 14.8px; top: 547px; letter-spacing: 1.4px; left: 169.5px;">Medications</span>
 <span class="t sm" style="font-size: 14.8px; top: 587px; letter-spacing: 1.28px; left: 169.5px;">Injections</span>
 <span class="t sm" style="font-size: 14.8px; top: 627px; letter-spacing: 0.74px; left: 169.5px;">Recalls</span>
 <span class="t sm" style="font-size: 14.8px; top: 667px; letter-spacing: 0.88px; left: 169.5px;">Diagnoses</span>
 <span class="t sm" style="color: rgb(31, 169, 174); font-size: 14.8px; top: 707px; letter-spacing: 1.34px; left: 169.5px;">Billing</span>
 <span class="t sm" style="font-size: 14.8px; top: 747px; letter-spacing: 1.39px; left: 169.5px;">Documents</span>
 <span class="t sm" style="font-size: 14.8px; top: 787px; letter-spacing: 1.16px; left: 169.5px;">Audit Trails</span>
 <span class="t sm" style="font-size: 14.8px; top: 827px; letter-spacing: 1.33px; left: 169.5px;">Chat History</span>
 <span class="t sm" style="font-size: 14.8px; top: 867px; letter-spacing: 1.53px; left: 169.5px;">Alerts</span>
 <span class="t sm" style="font-size: 14.8px; top: 907px; letter-spacing: 1.12px; left: 169.5px;">Referrals</span>
 <div class="abs" style="left:285.5px;top:466.5px;width:22.5px;height:17px;border-radius:8.5px;background:#ea4956"></div>
 <span class="t" style="color: rgb(255, 255, 255); font-size: 13px; top: 469px; left: 289.57px;">56</span>
 <div class="abs" style="left:328px;top:133px;width:13px;height:810px;background:#e9e9e9;border-radius:0 0 7px 7px"></div>
 <div class="abs" style="left:328px;top:133px;width:13px;height:713px;background:#b4b4b4;border-radius:5px 5px 7px 7px"></div>
 <div class="abs" style="left:148px;top:946px;width:193px;height:1px;background:#dedee2"></div>
 <svg class="abs" style="left:156px;top:953px" width="26" height="26" viewBox="0 0 26 26"><path d="M12.6 3 V23 M2.6 13 H22.6" stroke="#111" stroke-width="1.6" fill="none"></path><path d="M12.6 1 L9.8 4.8 H15.4 Z M12.6 25 L9.8 21.2 H15.4 Z M0.6 13 L4.4 10.2 V15.8 Z M24.6 13 L20.8 10.2 V15.8 Z" fill="#111"></path></svg>
 <span class="t" style="color: rgb(34, 34, 34); font-size: 18px; top: 955px; letter-spacing: 0.06px; left: 191.6px;">Customize</span>
</div>
<!-- MAIN PANEL -->
<div id="panel"><div class="abs" style="left:0;top:0;width:1482px;height:58px;background:#fff;border-bottom:1px solid #e2e2e4;box-shadow:0 2px 3px rgba(0,0,0,.08)"></div></div>
<div id="main">
 <span class="t" style="color: rgb(58, 58, 62); font-size: 18.6px; top: 154px; letter-spacing: 0.44px; left: 357.3px;">Generate Bills</span>
 <span class="t" style="color: rgb(58, 58, 62); font-size: 18.6px; top: 154px; letter-spacing: 0.4px; left: 517.5px;">Invoices</span>
 <span class="t" style="color: rgb(58, 58, 62); font-size: 18.6px; top: 154px; letter-spacing: 0.24px; left: 626.6px;">Receipts</span>
 <span class="t" style="color: rgb(58, 58, 62); font-size: 18.6px; top: 154px; letter-spacing: 0.23px; left: 738.5px;">Claims</span>
 <span class="t" style="color: rgb(34, 34, 34); font-weight: bold; font-size: 18.6px; top: 153px; letter-spacing: -0.2px; left: 834.8px;">Balance Due</span>
 <span class="t" style="color: rgb(58, 58, 62); font-size: 18.6px; top: 154px; letter-spacing: 0.18px; left: 982.6px;">Family Balance Due</span>
 <div class="abs" style="left:834.5px;top:186px;width:110px;height:2px;background:#1fa9ae"></div>
 <div class="abs" style="left:947.5px;top:140.5px;width:19px;height:19px;border-radius:50%;background:#ee4a58"></div>
 <span class="t" style="color: rgb(255, 255, 255); font-size: 10.5px; top: 145px; left: 954.08px;">$</span>
 <div class="abs" style="left:357px;top:198px;width:804px;height:83px;border:1px solid #e3e3e3;background:#fff"></div>
 <div class="abs" style="left:748px;top:198px;width:1px;height:83px;background:#e3e3e3"></div>
 <span class="t" style="font-size: 17px; top: 208px; letter-spacing: 0.44px; left: 393px;">Patient Balance Due as on Oct 07, 2025</span>
 <span class="t" style="color: rgb(68, 68, 68); font-size: 26.5px; top: 238px; letter-spacing: 1.05px; left: 498px;">2,279.00</span>
 <span class="t" style="font-size: 17px; top: 208px; letter-spacing: 0.37px; left: 784.6px;">Insurance Balance Due as on Oct 07, 2025</span>
 <span class="t" style="color: rgb(68, 68, 68); font-size: 26.5px; top: 238px; letter-spacing: 1.29px; left: 910.6px;">200.63</span>
 <span class="t" style="font-size: 19.6px; top: 295px; letter-spacing: 0.51px; left: 357px;">Outstanding Invoices Summary</span>
 <span class="t" style="font-size: 19.6px; top: 295px; letter-spacing: 0.23px; left: 942px;">Paid Invoices Summary</span>
<div id="tables">
 <div class="abs" style="left:357px;top:326px;width:531px;height:248px;background:#fff"></div>
 <div class="abs" style="left:357px;top:326px;width:531px;height:36px;background:#f0f0f0"></div>
 <div class="abs" style="left:357px;top:326px;width:186px;height:248px;background:#f0f0f0"></div>
 <div class="abs" style="left:357px;top:326px;width:532px;height:1px;background:#dcdcdc"></div>
 <div class="abs" style="left:357px;top:362px;width:532px;height:1px;background:#dcdcdc"></div>
 <div class="abs" style="left:357px;top:397px;width:532px;height:1px;background:#dcdcdc"></div>
 <div class="abs" style="left:357px;top:432px;width:532px;height:1px;background:#dcdcdc"></div>
 <div class="abs" style="left:357px;top:468px;width:532px;height:1px;background:#dcdcdc"></div>
 <div class="abs" style="left:357px;top:503px;width:532px;height:1px;background:#dcdcdc"></div>
 <div class="abs" style="left:357px;top:539px;width:532px;height:1px;background:#dcdcdc"></div>
 <div class="abs" style="left:357px;top:574px;width:532px;height:1px;background:#dcdcdc"></div>
 <div class="abs" style="left:357px;top:326px;width:1px;height:249px;background:#dcdcdc"></div>
 <div class="abs" style="left:543px;top:326px;width:1px;height:249px;background:#dcdcdc"></div>
 <div class="abs" style="left:660px;top:326px;width:1px;height:249px;background:#dcdcdc"></div>
 <div class="abs" style="left:777px;top:326px;width:1px;height:249px;background:#dcdcdc"></div>
 <div class="abs" style="left:888px;top:326px;width:1px;height:249px;background:#dcdcdc"></div>
 <span class="t" style="font-weight: bold; color: rgb(17, 17, 17); font-size: 17px; top: 336px; letter-spacing: 0.64px; left: 592.3px;">Patient</span>
 <span class="t" style="font-weight: bold; color: rgb(17, 17, 17); font-size: 17px; top: 336px; letter-spacing: 0.09px; left: 688.8px;">Insurance</span>
 <span class="t" style="font-weight: bold; color: rgb(17, 17, 17); font-size: 17px; top: 336px; letter-spacing: 0.41px; left: 839.8px;">Total</span>
 <span class="t" style="font-weight: bold; color: rgb(17, 17, 17); font-size: 17px; top: 371px; letter-spacing: 0.1px; left: 364.5px;">Payments</span>
 <span class="t" style="font-size: 17px; top: 371px; letter-spacing: 0.99px; left: 606.3px;">51.00</span>
 <span class="t" style="font-size: 17px; top: 371px; letter-spacing: 1.14px; left: 733.3px;">0.00</span>
 <span class="t" style="font-size: 17px; top: 371px; letter-spacing: 0.99px; left: 834.3px;">51.00</span>
 <span class="t" style="font-weight: bold; color: rgb(17, 17, 17); font-size: 17px; top: 406px; letter-spacing: 0.2px; left: 364.5px;">Adjustments</span>
 <span class="t" style="font-size: 17px; top: 406px; letter-spacing: 1.14px; left: 616.3px;">0.00</span>
 <span class="t" style="font-size: 17px; top: 406px; letter-spacing: 1.14px; left: 733.3px;">0.00</span>
 <span class="t" style="font-size: 17px; top: 406px; letter-spacing: 1.14px; left: 844.3px;">0.00</span>
 <span class="t" style="font-weight: bold; color: rgb(17, 17, 17); font-size: 17px; top: 442px; letter-spacing: 1.18px; left: 364.5px;">Write-off</span>
 <span class="t" style="font-size: 17px; top: 442px; letter-spacing: 1.14px; left: 616.3px;">0.00</span>
 <span class="t" style="font-size: 17px; top: 442px; letter-spacing: 1.14px; left: 733.3px;">0.00</span>
 <span class="t" style="font-size: 17px; top: 442px; letter-spacing: 1.14px; left: 844.3px;">0.00</span>
 <span class="t" style="font-weight: bold; color: rgb(17, 17, 17); font-size: 17px; top: 477px; letter-spacing: 0.44px; left: 364.5px;">Due</span>
 <span class="t" style="font-size: 17px; top: 477px; letter-spacing: 0.83px; left: 580.8px;">2,329.00</span>
 <span class="t" style="font-size: 17px; top: 477px; letter-spacing: 1px; left: 712.8px;">200.63</span>
 <span class="t" style="font-size: 17px; top: 477px; letter-spacing: 0.83px; left: 808.8px;">2,529.63</span>
 <span class="t" style="font-weight: bold; color: rgb(17, 17, 17); font-size: 17px; top: 512px; letter-spacing: -0.03px; left: 364.5px;">Unused Payments</span>
 <span class="t" style="font-size: 17px; top: 512px; letter-spacing: 0.99px; left: 606.3px;">50.00</span>
 <span class="t" style="font-size: 17px; top: 512px; letter-spacing: 1.14px; left: 733.3px;">0.00</span>
 <span class="t" style="font-size: 17px; top: 512px; letter-spacing: 0.99px; left: 834.3px;">50.00</span>
 <span class="t" style="font-weight: bold; color: rgb(17, 17, 17); font-size: 17px; top: 548px; letter-spacing: 0.1px; left: 364.5px;">Balance Due</span>
 <span class="t" style="font-size: 17px; top: 548px; letter-spacing: 0.83px; left: 580.8px;">2,279.00</span>
 <span class="t" style="font-size: 17px; top: 548px; letter-spacing: 1px; left: 712.8px;">200.63</span>
 <span class="t" style="font-weight: bold; font-size: 17px; top: 548px; letter-spacing: 0.83px; left: 808.8px;">2,479.63</span>
 <div class="abs" style="left:945px;top:326px;width:436.0px;height:142px;background:#fff"></div>
 <div class="abs" style="left:945px;top:326px;width:436.0px;height:36px;background:#f0f0f0"></div>
 <div class="abs" style="left:945px;top:326px;width:119.0px;height:142px;background:#f0f0f0"></div>
 <div class="abs" style="left:945px;top:326px;width:437.0px;height:1px;background:#dcdcdc"></div>
 <div class="abs" style="left:945px;top:362px;width:437.0px;height:1px;background:#dcdcdc"></div>
 <div class="abs" style="left:945px;top:397px;width:437.0px;height:1px;background:#dcdcdc"></div>
 <div class="abs" style="left:945px;top:432px;width:437.0px;height:1px;background:#dcdcdc"></div>
 <div class="abs" style="left:945px;top:468px;width:437.0px;height:1px;background:#dcdcdc"></div>
 <div class="abs" style="left:945px;top:326px;width:1px;height:143px;background:#dcdcdc"></div>
 <div class="abs" style="left:1064px;top:326px;width:1px;height:143px;background:#dcdcdc"></div>
 <div class="abs" style="left:1177px;top:326px;width:1px;height:143px;background:#dcdcdc"></div>
 <div class="abs" style="left:1293px;top:326px;width:1px;height:143px;background:#dcdcdc"></div>
 <div class="abs" style="left:1381px;top:326px;width:1px;height:143px;background:#dcdcdc"></div>
 <span class="t" style="color: rgb(51, 51, 51); -webkit-text-stroke: 0.45px rgb(51, 51, 51); font-size: 17px; top: 336px; letter-spacing: 1.26px; left: 1109.3px;">Patient</span>
 <span class="t" style="color: rgb(51, 51, 51); -webkit-text-stroke: 0.45px rgb(51, 51, 51); font-size: 17px; top: 336px; letter-spacing: 0.79px; left: 1204.8px;">Insurance</span>
 <span class="t" style="color: rgb(51, 51, 51); -webkit-text-stroke: 0.45px rgb(51, 51, 51); font-size: 17px; top: 336px; letter-spacing: 1.27px; left: 1332.8px;">Total</span>
 <span class="t" style="font-weight: bold; color: rgb(17, 17, 17); font-size: 17px; top: 371px; letter-spacing: 0.1px; left: 952.5px;">Payments</span>
 <span class="t" style="font-size: 17px; top: 371px; letter-spacing: 1px; left: 1112.8px;">575.00</span>
 <span class="t" style="font-size: 17px; top: 371px; letter-spacing: 1.14px; left: 1249.3px;">0.00</span>
 <span class="t" style="font-size: 17px; top: 371px; letter-spacing: 1px; left: 1316.8px;">575.00</span>
 <span class="t" style="font-weight: bold; color: rgb(17, 17, 17); font-size: 17px; top: 406px; letter-spacing: 0.2px; left: 952.5px;">Adjustments</span>
 <span class="t" style="font-size: 17px; top: 406px; letter-spacing: 1.14px; left: 1133.3px;">0.00</span>
 <span class="t" style="font-size: 17px; top: 406px; letter-spacing: 1.14px; left: 1249.3px;">0.00</span>
 <span class="t" style="font-size: 17px; top: 406px; letter-spacing: 1.14px; left: 1337.3px;">0.00</span>
 <span class="t" style="font-weight: bold; color: rgb(17, 17, 17); font-size: 17px; top: 442px; letter-spacing: 1.18px; left: 952.5px;">Write-off</span>
 <span class="t" style="font-size: 17px; top: 442px; letter-spacing: 1.14px; left: 1133.3px;">0.00</span>
 <span class="t" style="font-size: 17px; top: 442px; letter-spacing: 1.14px; left: 1249.3px;">0.00</span>
 <span class="t" style="font-size: 17px; top: 442px; letter-spacing: 1.14px; left: 1337.3px;">0.00</span>
</div>
<div id="filters">
 <div class="abs" style="left:357px;top:600px;width:1438px;height:203px;border:1px solid #dcdcdc;background:#fff"></div>
 <span class="t" style="font-size: 17.6px; top: 621px; letter-spacing: 0.75px; left: 373px;">Facility</span>
 <span class="t" style="font-size: 17.6px; top: 621px; letter-spacing: 0.01px; left: 585.8px;">Date Range</span>
 <span class="t" style="font-size: 17.6px; top: 621px; letter-spacing: 0.48px; left: 764.3px;">From</span>
 <span class="t" style="font-size: 17.6px; top: 621px; letter-spacing: 0.41px; left: 934.8px;">To</span>
 <div class="abs" style="left:373px;top:649px;width:188px;height:36px;border:1px solid #c9c9c9;background:#fff"></div>
 <span class="t" style="font-size: 17.6px; top: 660px; letter-spacing: 0.72px; left: 384.4px;">All</span>
 <svg class="abs" style="left:542.5px;top:662.5px" width="14" height="10" viewBox="0 0 14 10"><path d="M2 2.2 L7 7.4 L12 2.2" fill="none" stroke="#111" stroke-width="2" stroke-linecap="round" stroke-linejoin="round"></path></svg>
 <div class="abs" style="left:585.5px;top:649px;width:160.5px;height:36px;border:1px solid #c9c9c9;background:#fff"></div>
 <span class="t" style="font-size: 17.6px; top: 660px; letter-spacing: -0.53px; left: 597px;">Last 2 Years</span>
 <svg class="abs" style="left:727.5px;top:662.5px" width="14" height="10" viewBox="0 0 14 10"><path d="M2 2.2 L7 7.4 L12 2.2" fill="none" stroke="#111" stroke-width="2" stroke-linecap="round" stroke-linejoin="round"></path></svg>
 <div class="abs" style="left:764px;top:649px;width:151px;height:37.5px;border:1px solid #d4d4d4;border-radius:2px;background:#f2f2f2"></div>
 <div class="abs" style="left:764px;top:649px;width:116px;height:37.5px;border:1px solid #cfcfcf;background:#fff"></div>
 <span class="t" style="color: rgb(85, 85, 85); font-size: 17.6px; top: 660px; letter-spacing: -0.07px; left: 772px;">Oct 01, 2023</span>
 <svg class="abs" style="left:887px;top:657px" width="20" height="22" viewBox="0 0 20 22"><path d="M1.4 3.6 H18.6 V20.2 H1.4 Z" fill="#6b6b6b"></path><rect x="4.4" y="0.8" width="2.4" height="4.6" fill="#6b6b6b"></rect><rect x="13.2" y="0.8" width="2.4" height="4.6" fill="#6b6b6b"></rect><g fill="#fff"><rect x="3.2" y="8" width="2.6" height="2.4"></rect><rect x="6.9" y="8" width="2.6" height="2.4"></rect><rect x="10.6" y="8" width="2.6" height="2.4"></rect><rect x="14.3" y="8" width="2.6" height="2.4"></rect><rect x="3.2" y="11.6" width="2.6" height="2.4"></rect><rect x="6.9" y="11.6" width="2.6" height="2.4"></rect><rect x="10.6" y="11.6" width="2.6" height="2.4"></rect><rect x="14.3" y="11.6" width="2.6" height="2.4"></rect><rect x="3.2" y="15.2" width="2.6" height="2.4"></rect><rect x="6.9" y="15.2" width="2.6" height="2.4"></rect><rect x="10.6" y="15.2" width="2.6" height="2.4"></rect><rect x="14.3" y="15.2" width="2.6" height="2.4"></rect></g></svg>
 <div class="abs" style="left:934px;top:649px;width:151px;height:37.5px;border:1px solid #d4d4d4;border-radius:2px;background:#f2f2f2"></div>
 <div class="abs" style="left:934px;top:649px;width:116px;height:37.5px;border:1px solid #cfcfcf;background:#fff"></div>
 <span class="t" style="color: rgb(85, 85, 85); font-size: 17.6px; top: 660px; letter-spacing: -0.07px; left: 942px;">Oct 06, 2025</span>
 <svg class="abs" style="left:1057px;top:657px" width="20" height="22" viewBox="0 0 20 22"><path d="M1.4 3.6 H18.6 V20.2 H1.4 Z" fill="#6b6b6b"></path><rect x="4.4" y="0.8" width="2.4" height="4.6" fill="#6b6b6b"></rect><rect x="13.2" y="0.8" width="2.4" height="4.6" fill="#6b6b6b"></rect><g fill="#fff"><rect x="3.2" y="8" width="2.6" height="2.4"></rect><rect x="6.9" y="8" width="2.6" height="2.4"></rect><rect x="10.6" y="8" width="2.6" height="2.4"></rect><rect x="14.3" y="8" width="2.6" height="2.4"></rect><rect x="3.2" y="11.6" width="2.6" height="2.4"></rect><rect x="6.9" y="11.6" width="2.6" height="2.4"></rect><rect x="10.6" y="11.6" width="2.6" height="2.4"></rect><rect x="14.3" y="11.6" width="2.6" height="2.4"></rect><rect x="3.2" y="15.2" width="2.6" height="2.4"></rect><rect x="6.9" y="15.2" width="2.6" height="2.4"></rect><rect x="10.6" y="15.2" width="2.6" height="2.4"></rect><rect x="14.3" y="15.2" width="2.6" height="2.4"></rect></g></svg>
 <span class="t" style="font-weight: bold; color: rgb(17, 17, 17); font-size: 17.6px; top: 717px; letter-spacing: -0.43px; left: 373px;">Show Invoices</span>
 <svg class="abs" style="left:514.3px;top:715.7px" width="17" height="17" viewBox="0 0 17 17"><circle cx="8.5" cy="8.3" r="6.7" fill="#fff" stroke="#6e6e6e" stroke-width="1.1"></circle></svg>
 <span class="t" style="font-size: 17.6px; top: 718px; letter-spacing: 0.18px; left: 538px;">All Invoices</span>
 <svg class="abs" style="left:653.1px;top:715.7px" width="17" height="17" viewBox="0 0 17 17"><circle cx="8.5" cy="8.3" r="6.6" fill="#fff" stroke="#0a6fe0" stroke-width="1.5"></circle><circle cx="8.5" cy="8.3" r="3.9" fill="#0a6fe0"></circle></svg>
 <span class="t" style="font-size: 17.6px; top: 718px; letter-spacing: 0.13px; left: 677px;">Show Invoices with Due</span>
 <svg class="abs" style="left:889.8px;top:715.7px" width="17" height="17" viewBox="0 0 17 17"><circle cx="8.5" cy="8.3" r="6.7" fill="#fff" stroke="#6e6e6e" stroke-width="1.1"></circle></svg>
 <span class="t" style="font-size: 17.6px; top: 718px; letter-spacing: 0px; left: 913.7px;">Show Invoices for which Claim is processed &amp; Invoices having Due</span>
 <div class="abs" style="left:1658px;top:751px;width:123px;height:35.5px;border-radius:3px;background:#fe9f07"></div>
 <span class="t" style="color: rgb(255, 255, 255); -webkit-text-stroke: 0.3px rgb(255, 255, 255); font-size: 17.8px; top: 762px; letter-spacing: 0.27px; left: 1667px;">Show Report</span>
</div>
<div id="actions">
 <div class="abs" style="left:1176px;top:838px;width:132px;height:37.5px;border-radius:3px;background:#f3f3f3;border:1px solid #dfdfdf"></div>
 <span class="t" style="color: rgb(102, 102, 102); font-size: 18.4px; top: 848px; letter-spacing: 0.41px; left: 1184.6px;">Add Payment</span>
 <div class="abs" style="left:1312px;top:824px;width:172px;height:63.5px;border:3px solid #f01a5e"></div>
 <div class="abs" style="left:1321px;top:838px;width:154px;height:37.5px;border-radius:3px;background:#fe9f07"></div>
 <span class="t" style="color: rgb(255, 255, 255); -webkit-text-stroke: 0.35px rgb(255, 255, 255); font-size: 18.4px; top: 848px; letter-spacing: 0.39px; left: 1329px;">Send Statement</span>
 <div class="abs" style="left:1486.5px;top:838px;width:92.5px;height:37.5px;border-radius:3px;background:#f3f3f3;border:1px solid #dfdfdf"></div>
 <span class="t" style="color: rgb(102, 102, 102); font-size: 18.4px; top: 848px; letter-spacing: 1.29px; left: 1511.6px;">Print</span>
 <div class="abs" style="left:1592px;top:838px;width:105px;height:37.5px;border-radius:3px;background:#f3f3f3;border:1px solid #dfdfdf"></div>
 <span class="t" style="color: rgb(102, 102, 102); font-size: 18.4px; top: 848px; letter-spacing: 0.81px; left: 1600.6px;">Download</span>
 <span class="t" style="color: rgb(26, 143, 206); font-size: 18px; top: 847px; letter-spacing: 0.14px; left: 1710px;">Settings</span>
</div>
<div id="stmt" class="abs" style="left:343px;top:880px;width:1467px;height:104px;overflow:hidden">
  <div class="abs" style="left:14px;top:9px;width:1426px;height:200px;border:1px solid #e6e6e6;background:#fff"></div>
  <svg class="abs" style="left:112px;top:41px" width="84" height="70" viewBox="0 0 84 70">
   <ellipse cx="39.2" cy="13.2" rx="8.8" ry="10.9" fill="#9e0368" transform="rotate(-14 39.2 13.2)"></ellipse>
   <path d="M41.1 27.5 C36 27.5 31 24.1 24 24.1 C10 24.1 3 36 3 47 C3 60 12 72 41 100 C70 72 80 60 80 47 C80 36 72 24.1 58 24.1 C51 24.1 46 27.5 41.1 27.5 Z" fill="#ffa206"></path>
   <path d="M41.1 41.1 C37 41.1 33 37.3 28 37.3 C20 37.3 16.3 43 16.3 49 C16.3 56 24 66 41 84 C58 66 66.4 56 66.4 49 C66.4 43 62 37.3 54 37.3 C49 37.3 45 41.1 41.1 41.1 Z" fill="#fff"></path>
  </svg>
  <span class="t" style="font-size: 18px; top: 38px; letter-spacing: 0.02px; left: 232px;">Charm Wellness</span>
  <span class="t" style="font-size: 18px; top: 79px; letter-spacing: 0.08px; left: 232px;">123 Street Avenue, Suite 46</span>
  <span class="t" style="font-size: 18px; top: 101px; letter-spacing: 0.26px; left: 232px;">Ionia, MI 00005-3444</span>
 </div>
 <div class="abs" style="left:1810px;top:193px;width:13px;height:790px;background:#ebebeb;border-radius:7px"></div>
 <div class="abs" style="left:1810px;top:216px;width:13px;height:129px;background:#b6b6b6;border-radius:7px"></div>
</div>
<!-- BOTTOM BAR -->
<div id="bot">
 <div class="abs" style="left:325px;top:0;width:1px;height:33px;background:#e2e2e2"></div>
 <!-- chats -->
 <svg class="abs" style="left:40px;top:6px" width="22" height="18" viewBox="0 0 22 18"><ellipse cx="12.4" cy="7" rx="7.8" ry="6.2" fill="#8e8e93"></ellipse><path d="M8 11 L6.4 16 L13 12.6 Z" fill="#8e8e93"></path><path d="M5.4 6.4 C2.6 7.4 1.4 9.4 2 11.4 C2.4 12.8 3.4 13.6 4 14 L3.4 16.6 L6.4 14.8" fill="#aeaeb2"></path></svg>
 <span class="t" style="color: rgb(142, 142, 147); position: fixed; font-size: 10.6px; top: 1023px; letter-spacing: -0.05px; left: 36.4px;">Chats</span>
 <!-- channels -->
 <svg class="abs" style="left:152px;top:6px" width="20" height="18" viewBox="0 0 20 18" fill="#8e8e93"><circle cx="9.8" cy="5" r="3.4"></circle><path d="M3.6 16.8 C3.6 11.6 6 9.4 9.8 9.4 C13.6 9.4 16 11.6 16 16.8 Z"></path><circle cx="3.6" cy="4" r="2.2"></circle><circle cx="16" cy="4" r="2.2"></circle><path d="M0.6 12 C0.6 8.6 1.8 7 4 7 C5 7 5.6 7.4 6 7.8 C4.4 8.8 3.4 10.2 3 12 Z M19 12 C19 8.6 17.8 7 15.6 7 C14.6 7 14 7.4 13.6 7.8 C15.2 8.8 16.2 10.2 16.6 12 Z"></path></svg>
 <span class="t" style="color: rgb(142, 142, 147); position: fixed; font-size: 10.6px; top: 1023px; letter-spacing: -0.04px; left: 139.6px;">Channels</span>
 <!-- contacts -->
 <svg class="abs" style="left:265px;top:6px" width="18" height="18" viewBox="0 0 18 18" fill="#8e8e93"><circle cx="8.4" cy="5" r="3.9"></circle><path d="M1.4 16.8 C1.4 11.4 4 9.6 8.4 9.6 C12.8 9.6 15.4 11.4 15.4 16.8 Z"></path></svg>
 <span class="t" style="color: rgb(142, 142, 147); position: fixed; font-size: 10.6px; top: 1023px; letter-spacing: 0.17px; left: 251.5px;">Contacts</span>
 <span class="t" style="color: rgb(165, 165, 168); position: fixed; font-size: 15px; top: 1009px; letter-spacing: 0.25px; left: 338px;">Here is your Smart Chat (Ctrl+Space)</span>
 <!-- phone dial -->
 <svg class="abs" style="left:1873px;top:6px" width="26" height="26" viewBox="0 0 26 26" fill="#111">
  <path d="M3 2.6 C4.4 1 6 1.6 6.6 3 L8.4 6.8 C8.8 7.8 8.4 8.6 7.6 9.2 L6.4 10 C7 13.6 9 17 11.8 19 L13.2 18.2 C14 17.8 15 18 15.4 18.8 L17.4 22.4 C17.8 23.4 17.4 24.2 16.4 24.6 C8 27 -0.6 10 3 2.6 Z"></path>
  <g><circle cx="12.6" cy="3" r="1.1"></circle><circle cx="16.2" cy="3" r="1.1"></circle><circle cx="19.8" cy="3" r="1.1"></circle><circle cx="23.4" cy="3" r="1.1"></circle><circle cx="12.6" cy="6.6" r="1.1"></circle><circle cx="16.2" cy="6.6" r="1.1"></circle><circle cx="19.8" cy="6.6" r="1.1"></circle><circle cx="23.4" cy="6.6" r="1.1"></circle><circle cx="12.6" cy="10.2" r="1.1"></circle><circle cx="16.2" cy="10.2" r="1.1"></circle><circle cx="19.8" cy="10.2" r="1.1"></circle><circle cx="23.4" cy="10.2" r="1.1"></circle><circle cx="16.2" cy="13.8" r="1.1"></circle><circle cx="19.8" cy="13.8" r="1.1"></circle></g>
 </svg>
</div>


</body></html>
